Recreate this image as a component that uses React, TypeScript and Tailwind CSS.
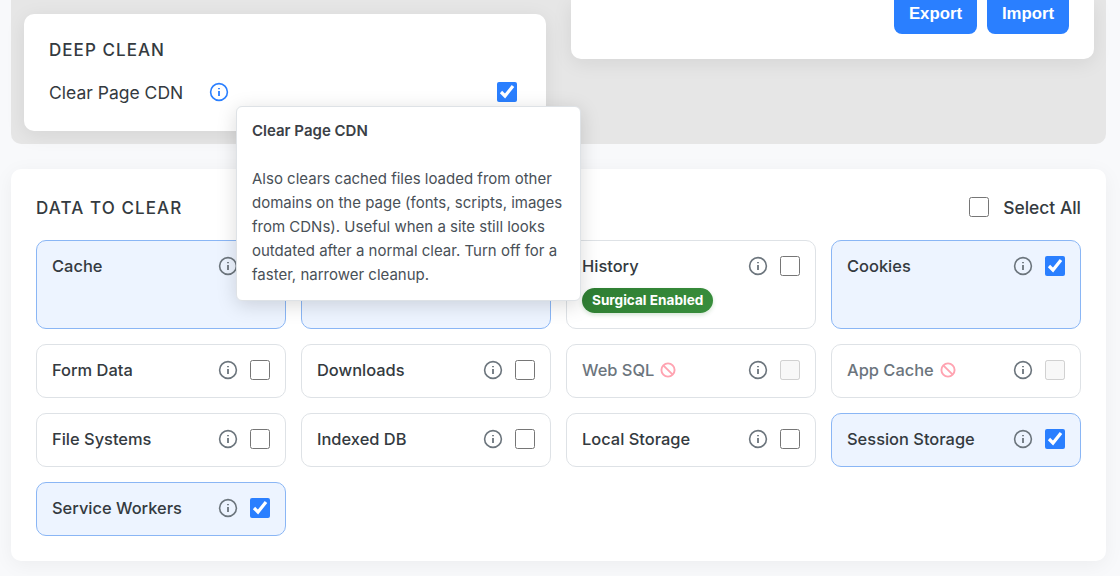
import { Fragment } from 'react'

type IconProps = {
  className?: string
}

type DataItem = {
  id: string
  label?: string
  checked?: boolean
  disabled?: boolean
  badge?: string
}

const dataItems: DataItem[] = [
  { id: 'cache', label: 'Cache', checked: true },
  { id: 'cacheStorage', checked: true },
  { id: 'history', label: 'History', badge: 'Surgical Enabled' },
  { id: 'cookies', label: 'Cookies', checked: true },
  { id: 'formData', label: 'Form Data' },
  { id: 'downloads', label: 'Downloads' },
  { id: 'webSQL', label: 'Web SQL', disabled: true },
  { id: 'appcache', label: 'App Cache', disabled: true },
  { id: 'fileSystems', label: 'File Systems' },
  { id: 'indexedDB', label: 'Indexed DB' },
  { id: 'localStorage', label: 'Local Storage' },
  { id: 'sessionStorage', label: 'Session Storage', checked: true },
  { id: 'serviceWorkers', label: 'Service Workers', checked: true },
]

const cdnHelp = [
  'Also clears cached files loaded from other',
  'domains on the page (fonts, scripts, images',
  'from CDNs). Useful when a site still looks',
  'outdated after a normal clear. Turn off for a',
  'faster, narrower cleanup.',
]

const InfoIcon = ({ className }: IconProps) => (
  <svg width="20" height="20" viewBox="0 0 20 20" fill="none" className={className}>
    <circle cx="10" cy="10" r="8.4" stroke="currentColor" strokeWidth="1.6" />
    <path d="M9.1 6h1.8v1.3H9.1zM9.1 9h1.8v5H9.1z" fill="currentColor" />
  </svg>
)

const BlockedIcon = ({ className }: IconProps) => (
  <svg width="16" height="16" viewBox="0 0 16 16" fill="none" className={className}>
    <circle cx="8" cy="8" r="6.6" stroke="currentColor" strokeWidth="1.9" />
    <path d="M3.3 3.3l9.4 9.4" stroke="currentColor" strokeWidth="1.9" />
  </svg>
)

const Checkbox = ({ checked, disabled, label }: { checked?: boolean; disabled?: boolean; label?: string }) => (
  <input
    type="checkbox"
    aria-label={label}
    defaultChecked={checked}
    disabled={disabled}
    className="size-5 shrink-0 accent-[#2a7fff]"
  />
)

const Tooltip = () => (
  <div className="absolute left-[27px] top-6 z-10 w-[345px] rounded-md border border-[#dee2e6] bg-white px-[15px] pt-3 pb-[13px] text-[15px] leading-6 text-[#495057] shadow-[0_4px_20px_rgba(0,0,0,0.15)]">
    <strong className="font-semibold text-[#3b4046]">Clear Page CDN</strong>
    <br />
    <br />
    {cdnHelp.map((line) => (
      <Fragment key={line}>
        <span className="whitespace-nowrap">{line}</span>
        <br />
      </Fragment>
    ))}
  </div>
)

const DataCard = ({ item }: { item: DataItem }) => (
  <div
    className={`rounded-[10px] border px-[15px] pt-[15px] ${item.badge ? 'pb-[15px]' : 'pb-[17px]'} ${
      item.checked ? 'border-[#8ab6f5] bg-[#edf4ff]' : 'border-[#dee2e6] bg-white'
    }`}
  >
    <div className="flex h-5 items-center">
      <span
        className={`flex items-center gap-1.5 whitespace-nowrap text-[16.45px] font-medium ${
          item.disabled ? 'text-[#6c757d]' : 'text-[#343a40]'
        }`}
      >
        {item.label}
        {item.disabled && <BlockedIcon className="text-[#ffa3b1]" />}
      </span>
      <InfoIcon className="ml-auto mr-3 shrink-0 text-[#6c757d]" />
      <Checkbox checked={item.checked} disabled={item.disabled} label={item.label} />
    </div>
    {item.badge && (
      <span className="mt-3 block h-[25px] w-fit rounded-full bg-linear-135 from-[#2e7d32] to-[#388e3c] px-2.5 text-[13.6px] leading-[25px] font-bold text-white shadow-[0_2px_4px_rgba(46,125,50,0.2)]">
        {item.badge}
      </span>
    )}
  </div>
)

export default function App() {
  return (
    <div className="h-[576px] overflow-hidden bg-[#f8f9fb] pr-[14px] pl-[11px] font-['Inter',sans-serif] text-[#343a40]">
      <section className="flex h-36 items-start gap-[25px] rounded-b-[10px] bg-[#e6e6e6] pl-[13px] pr-3">
        <div className="mt-3.5 h-[117px] w-[522px] rounded-[10px] bg-white px-[25px] pt-6 shadow-[0_4px_20px_rgba(0,0,0,0.08)]">
          <h2 className="text-[17px] leading-6 font-medium tracking-[1.05px]">DEEP CLEAN</h2>
          <div className="mt-5 flex h-5 items-center">
            <span className="w-[134px] whitespace-nowrap pt-0.5 text-[17.5px]">Clear Page CDN</span>
            <div className="relative ml-[26px]">
              <InfoIcon className="text-[#2a7fff]" />
              <Tooltip />
            </div>
            <div className="ml-auto mr-1 flex">
              <Checkbox checked label="Clear Page CDN" />
            </div>
          </div>
        </div>
        <div className="flex h-[59px] w-[523px] justify-end gap-2.5 rounded-b-[10px] bg-white pr-[25px] shadow-[0_4px_20px_rgba(0,0,0,0.08)]">
          <button className="-mt-2 h-[42px] w-[83px] rounded-lg bg-[#2a7fff] pt-0.5 font-['Liberation_Sans',sans-serif] text-[16.8px] font-bold text-white">
            Export
          </button>
          <button className="-mt-2 h-[42px] w-[82px] rounded-lg bg-[#2a7fff] pt-0.5 font-['Liberation_Sans',sans-serif] text-[16.8px] font-bold text-white">
            Import
          </button>
        </div>
      </section>

      <section className="mt-[25px] rounded-[10px] bg-white p-[25px] shadow-[0_4px_20px_rgba(0,0,0,0.05)]">
        <div className="mb-[19px] flex h-[27px] items-center justify-between">
          <h2 className="pt-0.5 text-[17px] font-medium tracking-[1.1px]">DATA TO CLEAR</h2>
          <label className="flex h-6 items-start gap-3.5 text-[17.4px] leading-6 font-medium">
            <span className="mt-px flex">
              <Checkbox label="Select All" />
            </span>
            Select All
          </label>
        </div>
        <div className="grid grid-cols-4 gap-[15px]">
          {dataItems.map((item) => (
            <DataCard key={item.id} item={item} />
          ))}
        </div>
      </section>
    </div>
  )
}
